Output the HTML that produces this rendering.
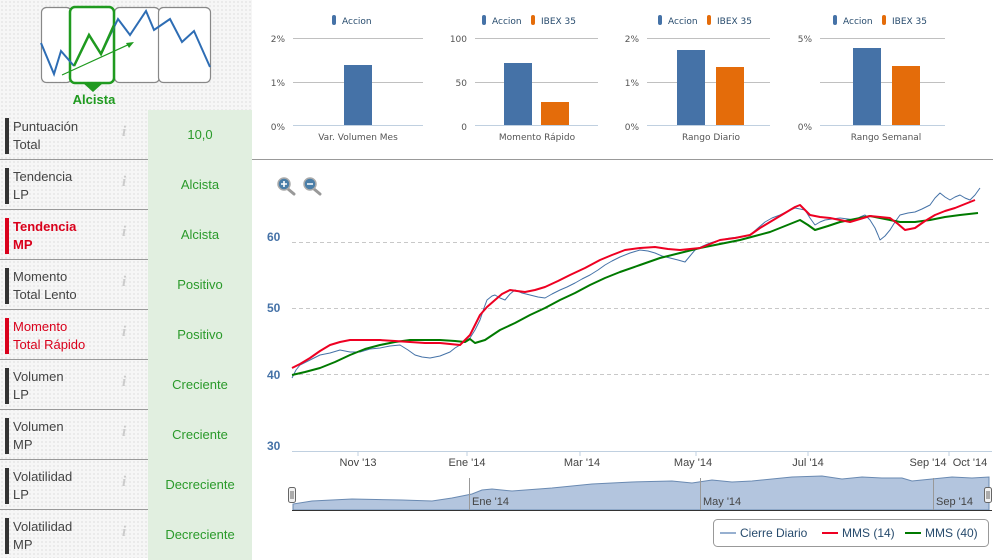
<!DOCTYPE html>
<html><head><meta charset="utf-8"><style>
body{margin:0;width:999px;height:558px;overflow:hidden;background:#fff;font-family:"Liberation Sans","DejaVu Sans",sans-serif;position:relative}
.left{position:absolute;left:0;top:0;width:252px;height:558px;background-color:#f6f6f6;background-image:radial-gradient(#e6e6e6 0.8px,transparent 0.9px);background-size:4px 4px}
.row{position:absolute;left:0;width:252px;height:49px;border-bottom:1px solid #999}
.lab{position:absolute;left:5px;top:8px;border-left:4px solid #333;padding-left:4px;font-size:13px;line-height:18px;color:#444;height:36px}
.lab.red{border-color:#d9001b;color:#d9001b}
.val{position:absolute;left:148px;top:0;width:104px;height:50px;background:#e1efe0;color:#2a9a2a;font-size:13px;text-align:center;line-height:50px}
.i{position:absolute;left:122px;top:14px;color:#ccc;font-style:italic;font-family:"Liberation Serif",serif;font-weight:bold;font-size:15px}
</style></head><body>
<div class="left"></div>
<svg style="position:absolute;left:0;top:0" width="252" height="110">
<g fill="#fff" stroke="#888" stroke-width="1.2">
<rect x="41.5" y="7.5" width="30" height="75" rx="5"/><rect x="114.5" y="7.5" width="45" height="75" rx="5"/><rect x="158.5" y="7.5" width="52" height="75" rx="5"/></g>
<rect x="70" y="7" width="44" height="76" rx="5" fill="#fff" stroke="#1f9a1f" stroke-width="2.5"/>
<polygon points="83,83 103,83 93,92" fill="#1f9a1f"/>
<polyline points="41,43 54,74 61,51 74,66" fill="none" stroke="#2e6db4" stroke-width="2"/>
<polyline points="74,66 89,35 101,54 118,19 130,35 146,11 154,30 170,19 182,42 194,31 210,67" fill="none" stroke="#2e6db4" stroke-width="2"/>
<polyline points="74,66 89,35 101,54 114,25" fill="none" stroke="#1f9a1f" stroke-width="2.5"/>
<line x1="62" y1="75" x2="132" y2="43" stroke="#1f9a1f" stroke-width="1.2"/><polygon points="134,42 126,43 129,48" fill="#1f9a1f"/>
<text x="94" y="104" text-anchor="middle" font-size="13" font-weight="bold" fill="#1f9a1f">Alcista</text>
</svg>
<div class="row" style="top:110px"><div class="lab">Puntuación<br>Total</div><span class="i">i</span><div class="val">10,0</div></div>
<div class="row" style="top:160px"><div class="lab">Tendencia<br>LP</div><span class="i">i</span><div class="val">Alcista</div></div>
<div class="row" style="top:210px"><div class="lab red" style="font-weight:bold">Tendencia<br>MP</div><span class="i">i</span><div class="val">Alcista</div></div>
<div class="row" style="top:260px"><div class="lab">Momento<br>Total Lento</div><span class="i">i</span><div class="val">Positivo</div></div>
<div class="row" style="top:310px"><div class="lab red">Momento<br>Total Rápido</div><span class="i">i</span><div class="val">Positivo</div></div>
<div class="row" style="top:360px"><div class="lab">Volumen<br>LP</div><span class="i">i</span><div class="val">Creciente</div></div>
<div class="row" style="top:410px"><div class="lab">Volumen<br>MP</div><span class="i">i</span><div class="val">Creciente</div></div>
<div class="row" style="top:460px"><div class="lab">Volatilidad<br>LP</div><span class="i">i</span><div class="val">Decreciente</div></div>
<div class="row" style="top:510px;border:0"><div class="lab">Volatilidad<br>MP</div><span class="i">i</span><div class="val">Decreciente</div></div>

<svg style="position:absolute;left:252px;top:0" width="747" height="558" font-family="Liberation Sans, sans-serif">
<line x1="0" y1="159.5" x2="741" y2="159.5" stroke="#999"/>
<g font-size="9" fill="#555" font-family="DejaVu Sans, sans-serif">
<!-- panel1 -->
<g transform="translate(0,0)">
<line x1="41" y1="38.5" x2="171" y2="38.5" stroke="#c0c0c0"/><line x1="41" y1="82.5" x2="171" y2="82.5" stroke="#c0c0c0"/><line x1="41" y1="125.5" x2="171" y2="125.5" stroke="#c0d0e0"/>
<text x="33" y="42" text-anchor="end">2%</text><text x="33" y="86" text-anchor="end">1%</text><text x="33" y="130" text-anchor="end">0%</text>
<rect x="92" y="65" width="28" height="60" fill="#4572a7"/>
<rect x="80" y="15" width="4" height="10" rx="2" fill="#4572a7"/><text x="90" y="24" fill="#274b6d">Accion</text>
<text x="106" y="140" text-anchor="middle">Var. Volumen Mes</text></g>
<!-- panel2 -->
<g>
<line x1="223" y1="38.5" x2="346" y2="38.5" stroke="#c0c0c0"/><line x1="223" y1="82.5" x2="346" y2="82.5" stroke="#c0c0c0"/><line x1="223" y1="125.5" x2="346" y2="125.5" stroke="#c0d0e0"/>
<text x="215" y="42" text-anchor="end">100</text><text x="215" y="86" text-anchor="end">50</text><text x="215" y="130" text-anchor="end">0</text>
<rect x="252" y="63" width="28" height="62" fill="#4572a7"/><rect x="289" y="102" width="28" height="23" fill="#e46c0a"/>
<rect x="230" y="15" width="4" height="10" rx="2" fill="#4572a7"/><text x="240" y="24" fill="#274b6d">Accion</text>
<rect x="279" y="15" width="4" height="10" rx="2" fill="#e46c0a"/><text x="289" y="24" fill="#274b6d">IBEX 35</text>
<text x="285" y="140" text-anchor="middle">Momento Rápido</text></g>
<!-- panel3 -->
<g>
<line x1="395" y1="38.5" x2="518" y2="38.5" stroke="#c0c0c0"/><line x1="395" y1="82.5" x2="518" y2="82.5" stroke="#c0c0c0"/><line x1="395" y1="125.5" x2="518" y2="125.5" stroke="#c0d0e0"/>
<text x="387" y="42" text-anchor="end">2%</text><text x="387" y="86" text-anchor="end">1%</text><text x="387" y="130" text-anchor="end">0%</text>
<rect x="425" y="50" width="28" height="75" fill="#4572a7"/><rect x="464" y="67" width="28" height="58" fill="#e46c0a"/>
<rect x="406" y="15" width="4" height="10" rx="2" fill="#4572a7"/><text x="416" y="24" fill="#274b6d">Accion</text>
<rect x="455" y="15" width="4" height="10" rx="2" fill="#e46c0a"/><text x="465" y="24" fill="#274b6d">IBEX 35</text>
<text x="459" y="140" text-anchor="middle">Rango Diario</text></g>
<!-- panel4 -->
<g>
<line x1="568" y1="38.5" x2="693" y2="38.5" stroke="#c0c0c0"/><line x1="568" y1="82.5" x2="693" y2="82.5" stroke="#c0c0c0"/><line x1="568" y1="125.5" x2="693" y2="125.5" stroke="#c0d0e0"/>
<text x="560" y="42" text-anchor="end">5%</text><text x="560" y="130" text-anchor="end">0%</text>
<rect x="601" y="48" width="28" height="77" fill="#4572a7"/><rect x="640" y="66" width="28" height="59" fill="#e46c0a"/>
<rect x="581" y="15" width="4" height="10" rx="2" fill="#4572a7"/><text x="591" y="24" fill="#274b6d">Accion</text>
<rect x="630" y="15" width="4" height="10" rx="2" fill="#e46c0a"/><text x="640" y="24" fill="#274b6d">IBEX 35</text>
<text x="634" y="140" text-anchor="middle">Rango Semanal</text></g>
</g>
<!-- zoom icons -->
<g stroke="#999" stroke-width="3" stroke-linecap="round"><line x1="36" y1="189" x2="42" y2="194"/><line x1="62" y1="189" x2="68" y2="194"/></g>
<circle cx="32" cy="184" r="6" fill="#4a7ea8" stroke="#aaa" stroke-width="1.5"/><circle cx="58" cy="184" r="6" fill="#4a7ea8" stroke="#aaa" stroke-width="1.5"/>
<path d="M29 184h6M32 181v6M55 184h6" stroke="#fff" stroke-width="1.6"/>
<!-- main chart grid -->
<g stroke="#c8c8c8" stroke-dasharray="4,3"><line x1="40" y1="242.5" x2="740" y2="242.5"/><line x1="40" y1="308.5" x2="740" y2="308.5"/><line x1="40" y1="374.5" x2="740" y2="374.5"/></g>
<line x1="40" y1="451.5" x2="740" y2="451.5" stroke="#c0d0e0"/>
<g font-size="12" font-weight="bold" fill="#4572a7"><text x="15" y="241">60</text><text x="15" y="312">50</text><text x="15" y="379">40</text><text x="15" y="450">30</text></g>
<g font-size="11" fill="#444" text-anchor="middle"><text x="106" y="466">Nov '13</text><text x="215" y="466">Ene '14</text><text x="330" y="466">Mar '14</text><text x="441" y="466">May '14</text><text x="556" y="466">Jul '14</text><text x="676" y="466">Sep '14</text><text x="718" y="466">Oct '14</text></g>
<g stroke="#c0d0e0"><line x1="106" y1="451" x2="106" y2="456"/><line x1="215" y1="451" x2="215" y2="456"/><line x1="328" y1="451" x2="328" y2="456"/><line x1="444" y1="451" x2="444" y2="456"/><line x1="556" y1="451" x2="556" y2="456"/><line x1="697" y1="451" x2="697" y2="456"/></g>
<g transform="translate(-252,0)" fill="none" stroke-linejoin="round">
<polyline stroke="#4572a7" stroke-width="1" points="292,378 296,370 300,365 310,360 320,355 330,353 340,350 350,352 360,352 370,349 380,348 390,346 400,345 408,350 415,355 422,357 430,358 440,356 450,352 455,348 460,345 465,341 470,338 475,330 480,320 484,308 487,300 492,296 495,295 500,298 505,300 510,294 515,290 522,293 530,295 538,297 545,298 552,294 560,290 567,287 575,283 582,279 590,275 598,270 605,265 612,261 620,257 630,253 640,250 648,251 655,253 662,256 670,258 678,260 685,262 690,256 695,250 703,246 710,243 720,240 730,238 740,237 750,235 758,228 765,222 772,218 780,215 788,211 795,208 800,209 805,210 810,218 815,225 820,222 825,220 832,219 840,218 848,219 855,220 860,217 865,215 870,220 875,228 878,235 880,240 885,236 890,230 895,222 900,215 908,213 915,212 922,209 930,205 935,198 940,193 945,197 950,200 955,197 960,195 965,198 970,200 975,195 980,188"/>
<polyline stroke="#007a00" stroke-width="2" points="292,375 305,372 320,368 335,362 350,355 365,349 380,345 395,342 410,340 425,340 440,340 455,341 465,342 470,339 475,343 485,340 500,330 515,323 530,315 545,308 560,300 575,293 590,285 605,278 620,272 640,265 660,258 680,253 700,248 720,244 740,240 755,236 770,232 785,226 800,220 808,225 815,230 828,226 840,222 855,219 870,216 885,219 900,222 915,222 930,220 945,217 960,215 978,213"/>
<polyline stroke="#ee0022" stroke-width="2" points="292,368 300,364 310,358 320,351 330,345 340,342 350,340 365,340 380,340 395,341 410,342 425,343 440,343 450,344 460,345 465,340 470,335 475,325 480,315 487,307 495,300 502,294 510,290 517,291 525,292 535,290 545,287 558,281 570,275 585,268 600,260 612,255 625,250 640,248 655,247 668,249 680,250 690,249 700,248 710,244 720,240 735,238 750,235 760,228 770,222 780,216 790,210 795,207 800,205 805,210 810,215 820,217 830,218 840,220 850,222 860,219 870,216 880,217 890,218 898,224 905,230 910,229 915,228 925,221 935,215 945,211 955,208 965,204 975,200"/>
</g>
<!-- navigator -->
<rect x="40" y="478" width="700" height="32" fill="none"/>
<path d="M41,510 L41,504 L60,501 L100,499 L150,500 L180,501 L200,498 L220,494 L230,490 L240,489 L260,491 L300,488 L340,484 L380,482 L420,481 L440,483 L460,480 L480,482 L500,481 L520,479 L540,477 L570,476 L590,479 L610,477 L630,478 L650,478 L660,481 L680,479 L700,477 L720,478 L737,477 L737,510 Z" fill="#b3c5de" stroke="#6a8ab2" stroke-width="1"/>
<line x1="40" y1="510.5" x2="740" y2="510.5" stroke="#333"/>
<g stroke="#999"><line x1="217.5" y1="478" x2="217.5" y2="510"/><line x1="448.5" y1="478" x2="448.5" y2="510"/><line x1="681.5" y1="478" x2="681.5" y2="510"/></g>
<g font-size="11" fill="#444"><text x="220" y="505">Ene '14</text><text x="451" y="505">May '14</text><text x="684" y="505">Sep '14</text></g>
<g fill="#f2f2f2" stroke="#666"><rect x="36.5" y="487.5" width="7" height="15" rx="2"/><rect x="732.5" y="487.5" width="7" height="15" rx="2"/></g>
<path d="M39 491v8M41 491v8M735 491v8M737 491v8" stroke="#666"/>
<!-- legend -->
<rect x="461.5" y="519.5" width="275" height="27" rx="4" fill="#fff" stroke="#999"/>
<g font-size="12" fill="#274b6d"><line x1="468" y1="533" x2="484" y2="533" stroke="#97b0d0" stroke-width="2"/><text x="488" y="537">Cierre Diario</text>
<line x1="570" y1="533" x2="586" y2="533" stroke="#ee0022" stroke-width="2"/><text x="590" y="537">MMS (14)</text>
<line x1="653" y1="533" x2="669" y2="533" stroke="#007a00" stroke-width="2"/><text x="673" y="537">MMS (40)</text></g>
</svg>
</body></html>
